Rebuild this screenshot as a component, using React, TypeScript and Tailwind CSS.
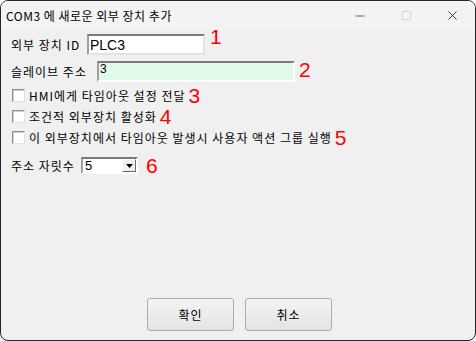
import { Minus, Square, X } from 'lucide-react'

const KR = "font-['Noto_Sans_CJK_KR','Noto_Sans',sans-serif]"
const NUM = "font-['Liberation_Sans',Arial,sans-serif] text-[21px] leading-none tracking-normal text-[#ff0000]"
const TXT = 'text-[12px] leading-none tracking-[1px] text-black'

function Checkbox() {
  return (
    <span className="ml-[1px] h-[13px] w-[13px] shrink-0 border border-t-[#8e8e8e] border-l-[#8e8e8e] border-b-[#e3e3e3] border-r-[#e3e3e3] bg-white shadow-[inset_1px_1px_0_#d0d0d0]" />
  )
}

function CheckRow({ label, num }: { label: string; num: string }) {
  return (
    <div className="flex h-[21px] items-center">
      <Checkbox />
      <span className={`ml-[4px] ${TXT}`}>{label}</span>
      <span className={`ml-[3px] ${NUM}`}>{num}</span>
    </div>
  )
}

export default function App() {
  return (
    <div className={`flex h-[341px] w-[476px] flex-col overflow-hidden rounded-[8px] border border-[#262626] bg-[#f0f0f0] ${KR}`}>
      {/* Title bar */}
      <div className="flex h-[29px] shrink-0 items-center bg-[#f3f3f3]">
        <span className="ml-[5px] text-[12px] leading-none tracking-[0.5px] text-black">COM3 에 새로운 외부 장치 추가</span>
        <div className="ml-auto flex h-full items-center">
          <div className="flex h-full w-[46px] items-center justify-center">
            <Minus className="h-[14px] w-[14px] text-black" strokeWidth={1} />
          </div>
          <div className="flex h-full w-[46px] items-center justify-center">
            <Square className="h-[11px] w-[11px] text-[#bdbdbd]" strokeWidth={1.2} />
          </div>
          <div className="flex h-full w-[46px] items-center justify-center">
            <X className="h-[15px] w-[15px] text-black" strokeWidth={1.2} />
          </div>
        </div>
      </div>

      {/* Body */}
      <div className="flex flex-1 flex-col pl-[10px]">
        <div className="mt-[4px] flex h-[21px] items-center">
          <span className={`w-[76px] ${TXT}`}>외부 장치 ID</span>
          <div className="flex h-[21px] w-[118px] items-center border-2 border-t-[#7a7a7a] border-l-[#a0a0a0] border-b-[#e3e3e3] border-r-[#e3e3e3] bg-white pl-[1px]">
            <span className="font-['Liberation_Sans',Arial,sans-serif] text-[14px] leading-none text-black">PLC3</span>
          </div>
          <span className={`ml-[5px] -mt-[17px] ${NUM}`}>1</span>
        </div>

        <div className="mt-[6px] flex h-[21px] items-center">
          <span className={`w-[86px] ${TXT}`}>슬레이브 주소</span>
          <div className="flex h-[21px] w-[198px] items-start border-2 border-t-[#7a7a7a] border-l-[#a0a0a0] border-b-[#ffffff] border-r-[#ffffff] bg-[#e0fce9] pl-[1px]">
            <span className="font-['Liberation_Sans',Arial,sans-serif] text-[12px] leading-none text-black">3</span>
          </div>
          <span className={`ml-[4px] -mt-[4px] ${NUM}`}>2</span>
        </div>

        <div className="mt-[3px] flex flex-col">
          <CheckRow label="HMI에게 타임아웃 설정 전달" num="3" />
          <CheckRow label="조건적 외부장치 활성화" num="4" />
          <CheckRow label="이 외부장치에서 타임아웃 발생시 사용자 액션 그룹 실행" num="5" />
        </div>

        <div className="mt-[9px] flex h-[17px] items-center">
          <span className={`w-[70px] ${TXT}`}>주소 자릿수</span>
          <div className="flex h-[17px] w-[57px] items-stretch border-2 border-t-[#7a7a7a] border-l-[#a0a0a0] border-b-[#ffffff] border-r-[#ffffff] bg-white">
            <span className="flex flex-1 items-center pl-[2px] font-['Liberation_Sans',Arial,sans-serif] text-[13px] leading-none text-black">5</span>
            <span className="flex w-[14px] items-center justify-center border border-t-[#ffffff] border-l-[#ffffff] border-b-[#6b6b6b] border-r-[#6b6b6b] bg-[#f0f0f0]">
              <svg width="7" height="4" viewBox="0 0 7 4">
                <path d="M0 0 H7 L3.5 4 Z" fill="#000" />
              </svg>
            </span>
          </div>
          <span className={`ml-[8px] ${NUM}`}>6</span>
        </div>

        <div className="mt-auto mb-[9px] flex justify-center gap-[11px] pr-[8px]">
          <button className={`h-[33px] w-[87px] rounded-[3px] border border-[#acacac] bg-gradient-to-b from-[#f4f4f4] to-[#e4e4e4] pl-[1px] ${TXT}`}>
            확인
          </button>
          <button className={`h-[33px] w-[87px] rounded-[3px] border border-[#acacac] bg-gradient-to-b from-[#f4f4f4] to-[#e4e4e4] pl-[1px] ${TXT}`}>
            취소
          </button>
        </div>
      </div>
    </div>
  )
}
